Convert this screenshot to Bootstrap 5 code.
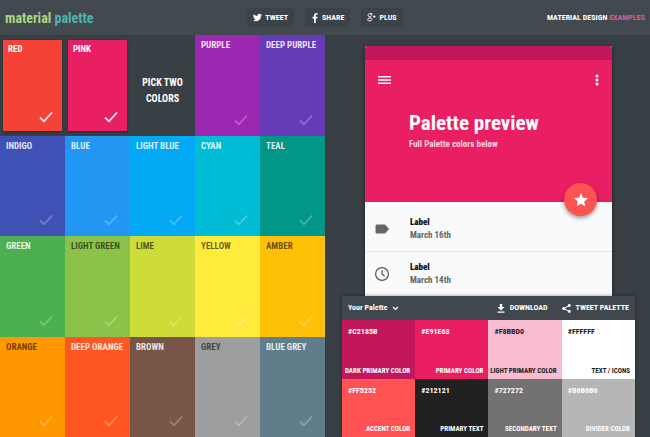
<!DOCTYPE html>
<html lang="en">
<head>
<meta charset="utf-8">
<meta name="viewport" content="width=device-width, initial-scale=1">
<title>Material Palette</title>
<link href="https://cdn.jsdelivr.net/npm/bootstrap@5.3.0/dist/css/bootstrap.min.css" rel="stylesheet">
<style>
  body { background: #394045; color: #fff; font-family: "Liberation Sans Narrow", "Roboto Condensed", "Liberation Sans", sans-serif; font-weight: 700; font-size: 8px; line-height: 12px; }
  svg { display: block; flex: none; fill: currentColor; }
  a { color: inherit; text-decoration: none; }
  button { border: 0; color: inherit; font: inherit; }
  .topbar { background: #42494f; height: 35px; padding: 0 5px; }
  .brand { font-size: 14px; line-height: 20px; color: #aed581; }
  .brand span { color: #4db6ac; }
  .share-nav { gap: 11px; }
  .share-btn { background: #3c4348; height: 19px; padding: 0 6px; gap: 3px; border-radius: 2px; }
  .examples { color: #d0609a; }
  .swatches { display: grid; grid-template-columns: repeat(5, minmax(0, 1fr)); grid-auto-rows: minmax(100px, 1fr); }
  .swatch { padding: 4px 0 0 6px; font-size: 9px; line-height: 12px; text-align: left; white-space: nowrap; color: #fffd; }
  .swatch svg { margin: 0 12px 10px auto; opacity: .27; }
  .swatch.dim { color: #0009; }
  .swatch.picked { margin: 5px 3px; padding: 3px 0 0 5px; color: #fff; box-shadow: 0 1px 3px #0006; }
  .swatch.picked svg { margin: 0 9px 8px auto; opacity: .9; }
  .pick-note { font-size: 10px; line-height: 16px; padding-top: 12px; }
  .stage { padding: 11px 0 0 2px; }
  .phone { width: 76.5%; background: #f9fafb; border-radius: 2px 2px 0 0; box-shadow: 0 1px 5px #0008; }
  .status { height: 14px; background: #c2185b; border-radius: 2px 2px 0 0; }
  .hero { height: 142px; background: #e91e63; padding: 13px 11px 0 13px; }
  .hero h1 { font-size: 21px; line-height: 26px; font-weight: 700; margin: 23px 0 0 31px; }
  .hero p { font-size: 9px; line-height: 14px; margin: 1px 0 0 31px; color: #fffc; }
  .fab { width: 33px; height: 33px; right: 15px; bottom: -14px; background: #ff5252; box-shadow: 0 2px 4px #0006; }
  .entry { height: 49px; padding: 5px 10px 0 9px; gap: 20px; color: #666; font-size: 9px; }
  .entry + .entry { height: 45px; padding-top: 0; border-top: 1px solid #e2e3e4; }
  .entry strong { display: block; color: #111; }
  .entry div { line-height: 13px; }
  .panel { width: 90.7%; box-shadow: 0 0 4px #0006; }
  .panel-head { height: 24px; background: #40484e; padding: 0 6px; gap: 14px; }
  .panel-head button { gap: 5px; }
  .tones { display: grid; grid-template-columns: repeat(4, minmax(0, 1fr)); grid-auto-rows: 1fr; }
  .tone { min-height: 58px; padding: 6px 5px 2px 1px; text-indent: 5px; white-space: nowrap; }
  .role { font-size: 7px; text-align: right; text-indent: 0; }
  .c-red { background: #f44336; } .c-pink { background: #e91e63; } .c-purple { background: #9c27b0; }
  .c-deep-purple { background: #673ab7; } .c-indigo { background: #3f51b5; } .c-blue { background: #2196f3; }
  .c-light-blue { background: #03a9f4; } .c-cyan { background: #00bcd4; } .c-teal { background: #009688; }
  .c-green { background: #4caf50; } .c-light-green { background: #8bc34a; } .c-lime { background: #cddc39; }
  .c-yellow { background: #ffeb3b; } .c-amber { background: #ffc107; } .c-orange { background: #ff9800; }
  .c-deep-orange { background: #ff5722; } .c-brown { background: #795548; } .c-grey { background: #9e9e9e; }
  .c-blue-grey { background: #607d8b; }
  .t-dark { background: #c2185b; } .t-light { background: #f8bbd0; color: #212121; } .t-white { background: #fff; color: #212121; }
  .t-accent { background: #ff5252; } .t-text { background: #212121; } .t-second { background: #727272; } .t-divider { background: #b6b6b6; }
</style>
<script src="https://cdn.jsdelivr.net/npm/bootstrap@5.3.0/dist/js/bootstrap.bundle.min.js"></script>
</head>
<body class="min-vh-100 d-flex flex-column">
<svg width="0" height="0" class="d-none"><symbol id="tick" viewBox="0 0 14 12"><path d="M1 6.5 5 10.3 13 1.5" fill="none" stroke="#fff" stroke-width="1.8"/></symbol></svg>

<header class="topbar row g-0 align-items-center">
  <div class="col"><a href="#" class="brand">material <span>palette</span></a></div>
  <nav class="col-auto share-nav d-flex" aria-label="Share">
    <button type="button" class="share-btn d-flex align-items-center"><svg width="9" height="9" viewBox="0 0 24 24"><path d="M24 4.6a10 10 0 0 1-2.8.8 5 5 0 0 0 2.1-2.7 10 10 0 0 1-3.1 1.2 4.9 4.9 0 0 0-8.4 4.5A14 14 0 0 1 1.7 3.2a4.9 4.9 0 0 0 1.5 6.500 5 5 0 0 1-2.200-.6c0 2.400 1.600 4.400 3.900 4.900a5 5 0 0 1-2.200.1 4.900 4.900 0 0 0 4.600 3.400A10 10 0 0 1 0 19.500 14 14 0 0 0 21.500 7.100 10 10 0 0 0 24 4.600z"/></svg>TWEET</button>
    <button type="button" class="share-btn d-flex align-items-center"><svg width="8" height="10" viewBox="-3 0 16 20"><path d="M3 20V11H0V7.500H3V5C3 1.800 4.800 0 7.700 0L10 .2V3.400H8.200C6.800 3.400 6.500 4.100 6.500 5.200V7.500H10L9.500 11H6.500V20z"/></svg>SHARE</button>
    <button type="button" class="share-btn d-flex align-items-center"><svg width="9" height="9" viewBox="0 0 20 20" stroke="currentColor" stroke-width="2"><path d="M12 1.500H6.500C1 1.500 1 8.500 6 8.500S11 1.500 7 1.500M6.500 8.500C6 11 11 11 11 14.500S1.500 19 1.500 15 6 11.500 8 11.500M16 5v6M13 8h6" fill="none"/></svg>PLUS</button>
  </nav>
  <div class="col text-end"><a href="#">MATERIAL DESIGN <span class="examples">EXAMPLES</span></a></div>
</header>

<main class="row g-0 flex-grow-1">
  <section class="col-6 swatches" aria-label="Colors">
    <button type="button" aria-pressed="true" class="swatch picked c-red d-flex flex-column justify-content-between">RED<svg width="14" height="12"><use href="#tick"/></svg></button>
    <button type="button" aria-pressed="true" class="swatch picked c-pink d-flex flex-column justify-content-between">PINK<svg width="14" height="12"><use href="#tick"/></svg></button>
    <div class="pick-note d-flex align-items-center justify-content-center text-center">PICK TWO<br>COLORS</div>
    <button type="button" class="swatch c-purple d-flex flex-column justify-content-between">PURPLE<svg width="14" height="12"><use href="#tick"/></svg></button>
    <button type="button" class="swatch c-deep-purple d-flex flex-column justify-content-between">DEEP PURPLE<svg width="14" height="12"><use href="#tick"/></svg></button>
    <button type="button" class="swatch c-indigo d-flex flex-column justify-content-between">INDIGO<svg width="14" height="12"><use href="#tick"/></svg></button>
    <button type="button" class="swatch c-blue d-flex flex-column justify-content-between">BLUE<svg width="14" height="12"><use href="#tick"/></svg></button>
    <button type="button" class="swatch c-light-blue d-flex flex-column justify-content-between">LIGHT BLUE<svg width="14" height="12"><use href="#tick"/></svg></button>
    <button type="button" class="swatch c-cyan d-flex flex-column justify-content-between">CYAN<svg width="14" height="12"><use href="#tick"/></svg></button>
    <button type="button" class="swatch c-teal d-flex flex-column justify-content-between">TEAL<svg width="14" height="12"><use href="#tick"/></svg></button>
    <button type="button" class="swatch c-green d-flex flex-column justify-content-between">GREEN<svg width="14" height="12"><use href="#tick"/></svg></button>
    <button type="button" class="swatch dim c-light-green d-flex flex-column justify-content-between">LIGHT GREEN<svg width="14" height="12"><use href="#tick"/></svg></button>
    <button type="button" class="swatch dim c-lime d-flex flex-column justify-content-between">LIME<svg width="14" height="12"><use href="#tick"/></svg></button>
    <button type="button" class="swatch dim c-yellow d-flex flex-column justify-content-between">YELLOW<svg width="14" height="12"><use href="#tick"/></svg></button>
    <button type="button" class="swatch dim c-amber d-flex flex-column justify-content-between">AMBER<svg width="14" height="12"><use href="#tick"/></svg></button>
    <button type="button" class="swatch dim c-orange d-flex flex-column justify-content-between">ORANGE<svg width="14" height="12"><use href="#tick"/></svg></button>
    <button type="button" class="swatch c-deep-orange d-flex flex-column justify-content-between">DEEP ORANGE<svg width="14" height="12"><use href="#tick"/></svg></button>
    <button type="button" class="swatch c-brown d-flex flex-column justify-content-between">BROWN<svg width="14" height="12"><use href="#tick"/></svg></button>
    <button type="button" class="swatch dim c-grey d-flex flex-column justify-content-between">GREY<svg width="14" height="12"><use href="#tick"/></svg></button>
    <button type="button" class="swatch c-blue-grey d-flex flex-column justify-content-between">BLUE GREY<svg width="14" height="12"><use href="#tick"/></svg></button>
  </section>

  <section class="col-6 stage d-flex flex-column align-items-center" aria-label="Preview">
    <div class="phone">
      <div class="status"></div>
      <div class="hero position-relative">
        <div class="d-flex justify-content-between align-items-center">
          <button type="button" class="bg-transparent p-0" aria-label="Menu"><svg width="13" height="14" viewBox="0 0 13 14"><path d="M0 3h13v1.500H0zM0 6.300h13v1.500H0zM0 9.600h13v1.500H0z"/></svg></button>
          <button type="button" class="bg-transparent p-0" aria-label="More"><svg width="8" height="14" viewBox="0 0 8 14"><circle cx="4" cy="3" r="1.500"/><circle cx="4" cy="7" r="1.500"/><circle cx="4" cy="11" r="1.500"/></svg></button>
        </div>
        <h1>Palette preview</h1>
        <p>Full Palette colors below</p>
        <button type="button" class="fab position-absolute rounded-circle p-0 d-flex align-items-center justify-content-center" aria-label="Favorite"><svg width="14" height="14" viewBox="2 2 20 20"><path d="M12 17.270 18.180 21l-1.640-7.030L22 9.240l-7.190-.61L12 2 9.190 8.630 2 9.240l5.460 4.730L5.820 21z"/></svg></button>
      </div>
      <div class="entry d-flex align-items-center">
        <svg width="16" height="16" viewBox="0 0 16 16"><path d="M3 3.500h7.500q.8 0 1.300.7L15 8l-3.200 3.800q-.5.7-1.300.7H3q-1.500 0-1.500-1.500V5Q1.500 3.500 3 3.500z"/></svg>
        <div><strong>Label</strong>March 16th</div>
      </div>
      <div class="entry d-flex align-items-center">
        <svg width="16" height="16" viewBox="0 0 16 16"><circle cx="8" cy="8" r="6.400" fill="none" stroke="#555" stroke-width="1.200"/><path d="M8 4.200V8l2.600 2.300" fill="none" stroke="#555" stroke-width="1.200"/></svg>
        <div><strong>Label</strong>March 14th</div>
      </div>
    </div>
    <div class="panel flex-grow-1 d-flex flex-column position-relative">
      <div class="panel-head d-flex align-items-center">
        <button type="button" class="bg-transparent p-0 me-auto d-flex align-items-center">Your Palette<svg width="7" height="7" viewBox="0 0 7 7"><path d="M1 2l2.500 2.500L6 2" fill="none" stroke="#fff" stroke-width="1.200"/></svg></button>
        <button type="button" class="bg-transparent p-0 d-flex align-items-center"><svg width="8" height="9" viewBox="0 0 8 9"><path d="M2.800 0h2.400v3H7.500L4 6.500.5 3h2.300zM.5 7.500h7v1.200h-7z"/></svg>DOWNLOAD</button>
        <button type="button" class="bg-transparent p-0 d-flex align-items-center"><svg width="9" height="9" viewBox="0 0 9 9"><circle cx="1.700" cy="4.500" r="1.500"/><circle cx="7.300" cy="1.500" r="1.400"/><circle cx="7.300" cy="7.500" r="1.400"/><path d="M7.300 1.500 1.700 4.500 7.300 7.500" fill="none" stroke="#fff" stroke-width="1"/></svg>TWEET PALETTE</button>
      </div>
      <div class="tones flex-grow-1">
        <div class="tone t-dark d-flex flex-column justify-content-between">#C2185B<span class="role">DARK PRIMARY COLOR</span></div>
        <div class="tone c-pink d-flex flex-column justify-content-between">#E91E63<span class="role">PRIMARY COLOR</span></div>
        <div class="tone t-light d-flex flex-column justify-content-between">#F8BBD0<span class="role">LIGHT PRIMARY COLOR</span></div>
        <div class="tone t-white d-flex flex-column justify-content-between">#FFFFFF<span class="role">TEXT / ICONS</span></div>
        <div class="tone t-accent d-flex flex-column justify-content-between">#FF5252<span class="role">ACCENT COLOR</span></div>
        <div class="tone t-text d-flex flex-column justify-content-between">#212121<span class="role">PRIMARY TEXT</span></div>
        <div class="tone t-second d-flex flex-column justify-content-between">#727272<span class="role">SECONDARY TEXT</span></div>
        <div class="tone t-divider d-flex flex-column justify-content-between">#B6B6B6<span class="role">DIVIDER COLOR</span></div>
      </div>
    </div>
  </section>
</main>
</body>
</html>
